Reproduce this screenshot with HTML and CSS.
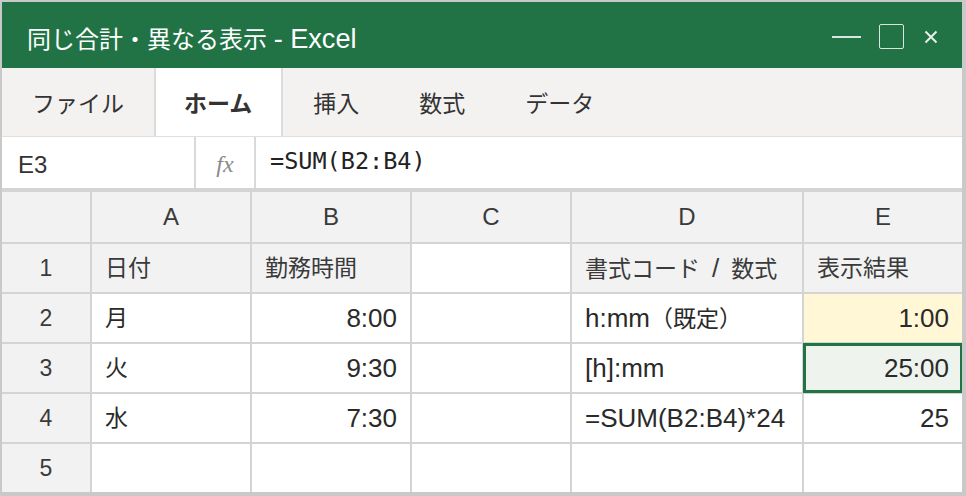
FILE: index.html
```html
<!DOCTYPE html>
<html lang="ja">
<head>
    <meta charset="UTF-8">
    <title>同じ合計・異なる表示 - Excel</title>
    <link rel="stylesheet" href="styles.css">
</head>
<body>
    <div class="window">
        <div class="titlebar">
            <div class="title">同じ合計・異なる表示 <span class="lat">- Excel</span></div>
            <div class="controls">
                <span class="ctl-min"></span>
                <span class="ctl-max"></span>
                <svg class="ctl-close" width="14" height="14" viewBox="0 0 14 14">
                    <path d="M1.5 1.5 L12.5 12.5 M12.5 1.5 L1.5 12.5" stroke="#e8efe9" stroke-width="2" fill="none"/>
                </svg>
            </div>
        </div>

        <div class="tabs">
            <div class="tab">ファイル</div>
            <div class="tab active">ホーム</div>
            <div class="tab">挿入</div>
            <div class="tab">数式</div>
            <div class="tab">データ</div>
        </div>

        <div class="formula-bar">
            <div class="name-box">E3</div>
            <div class="fx">fx</div>
            <div class="formula">=SUM(B2:B4)</div>
        </div>

        <!-- シート -->
        <div class="sheet">
            <div class="hd corner"></div>
            <div class="hd col">A</div>
            <div class="hd col">B</div>
            <div class="hd col">C</div>
            <div class="hd col">D</div>
            <div class="hd col">E</div>

            <div class="hd row">1</div>
            <div class="cell label">日付</div>
            <div class="cell label">勤務時間</div>
            <div class="cell"></div>
            <div class="cell label">書式コード<span class="lat sep">/</span>数式</div>
            <div class="cell label">表示結果</div>

            <div class="hd row">2</div>
            <div class="cell">月</div>
            <div class="cell num">8:00</div>
            <div class="cell"></div>
            <div class="cell"><span class="lat">h:mm</span>（既定）</div>
            <div class="cell num warn">1:00</div>

            <div class="hd row">3</div>
            <div class="cell">火</div>
            <div class="cell num">9:30</div>
            <div class="cell"></div>
            <div class="cell"><span class="lat">[h]:mm</span></div>
            <div class="cell num selected">25:00</div>

            <div class="hd row">4</div>
            <div class="cell">水</div>
            <div class="cell num">7:30</div>
            <div class="cell"></div>
            <div class="cell"><span class="lat">=SUM(B2:B4)*24</span></div>
            <div class="cell num">25</div>

            <div class="hd row">5</div>
            <div class="cell"></div>
            <div class="cell"></div>
            <div class="cell"></div>
            <div class="cell"></div>
            <div class="cell"></div>
        </div>
    </div>
</body>
</html>
```

FILE: styles.css
```css
body {
    margin: 0;
    background-color: #c9c9c9;
    font-family: 'Liberation Sans', 'Noto Sans CJK JP', sans-serif;
    color: #333;
}
.window {
    margin: 2px 4px 4px 2px;
    width: 960px;
    height: 490px;
    background-color: #fff;
    overflow: hidden;
}
.lat {
    font-size: 1.13em;
}

/* タイトルバー */
.titlebar {
    height: 66px;
    background-color: #217346;
    display: flex;
    align-items: center;
    justify-content: space-between;
    padding: 0 24px 0 25px;
    box-sizing: border-box;
}
.title {
    color: #fff;
    font-size: 24px;
    padding-top: 5px;
}
.controls {
    display: flex;
    align-items: center;
    gap: 18px;
    padding-top: 3px;
}
.ctl-min {
    width: 29px;
    height: 2px;
    background-color: #d9e6dd;
}
.ctl-max {
    width: 23px;
    height: 23px;
    border: 1px solid #d9e6dd;
    border-radius: 2px;
}
.ctl-close {
    margin-left: 2px;
}

/* リボンのタブ */
.tabs {
    height: 69px;
    box-sizing: border-box;
    background-color: #f3f2f1;
    border-bottom: 1px solid #e0e0e0;
    display: flex;
}
.tab {
    display: flex;
    align-items: center;
    padding: 0 30px;
    font-size: 23px;
    color: #333;
}
.tab.active {
    background-color: #fff;
    border-left: 2px solid #dcdcdc;
    border-right: 2px solid #dcdcdc;
    font-weight: bold;
    padding: 0 29px 0 28px;
}

/* 数式バー */
.formula-bar {
    height: 51px;
    display: flex;
    border-bottom: 2px solid #d4d4d4;
}
.name-box {
    width: 176px;
    padding-left: 16px;
    border-right: 2px solid #d9d9d9;
    display: flex;
    align-items: center;
    font-size: 24px;
    padding-top: 4px;
}
.fx {
    width: 58px;
    border-right: 2px solid #d9d9d9;
    display: flex;
    align-items: center;
    justify-content: center;
    font-family: 'Liberation Serif', serif;
    font-style: italic;
    font-size: 24px;
    color: #8a8a8a;
    padding-top: 4px;
}
.formula {
    padding-left: 14px;
    display: flex;
    align-items: center;
    font-family: 'DejaVu Sans Mono', monospace;
    font-size: 23.5px;
    color: #222;
    padding-bottom: 4px;
}

/* シート */
.sheet {
    display: grid;
    grid-template-columns: 88px 158px 158px 158px 230px 158px;
    grid-template-rows: 50px repeat(5, 48px);
    gap: 2px;
    background-color: #d4d4d4;
    padding-top: 2px;
}
.hd {
    background-color: #f2f2f2;
    display: flex;
    align-items: center;
    justify-content: center;
    color: #3a3a3a;
}
.hd.col {
    font-size: 24px;
}
.hd.row {
    font-size: 23px;
}
.cell {
    background-color: #fff;
    padding: 0 13px;
    line-height: 48px;
    font-size: 23px;
    color: #2a2a2a;
    white-space: nowrap;
}
.cell .lat {
    font-size: 26px;
}
.cell .sep {
    margin: 0 12px;
}
.cell.label {
    background-color: #f2f2f2;
    color: #3a3a3a;
}
.cell.num {
    text-align: right;
    font-size: 26px;
}
.cell.warn {
    background-color: #fff7d6;
}
.cell.selected {
    background-color: #eef3ee;
    box-shadow: inset 0 0 0 3px #217346;
    margin: -1px;
    padding: 1px 14px;
}
```
